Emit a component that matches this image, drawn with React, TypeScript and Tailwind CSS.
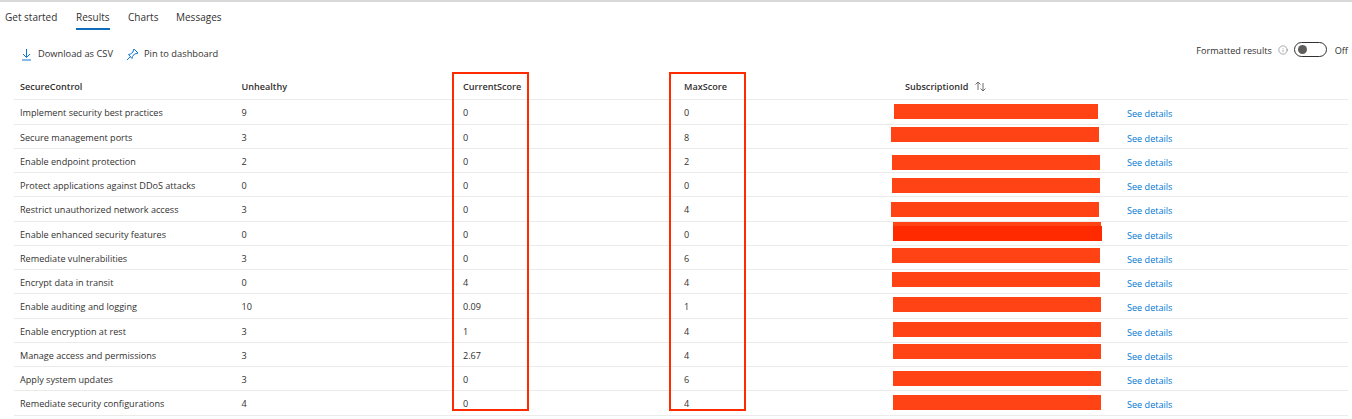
import { Info } from "lucide-react"

const rows = [
  { name: "Implement security best practices", unhealthy: "9", current: "0", max: "0", h: "h-[25px]", bar: [880, 4, 204] },
  { name: "Secure management ports", unhealthy: "3", current: "0", max: "8", h: "h-[24px]", bar: [877, 2, 208] },
  { name: "Enable endpoint protection", unhealthy: "2", current: "0", max: "2", h: "h-[24px]", bar: [878, 6, 208] },
  { name: "Protect applications against DDoS attacks", unhealthy: "0", current: "0", max: "0", h: "h-[24px]", bar: [878, 5, 208] },
  { name: "Restrict unauthorized network access", unhealthy: "3", current: "0", max: "4", h: "h-[25px]", bar: [877, 5, 208] },
  { name: "Enable enhanced security features", unhealthy: "0", current: "0", max: "0", h: "h-[24px]", bar: [879, 0, 208] },
  { name: "Remediate vulnerabilities", unhealthy: "3", current: "0", max: "6", h: "h-[24px]", bar: [878, 2, 208] },
  { name: "Encrypt data in transit", unhealthy: "0", current: "4", max: "4", h: "h-[24px]", bar: [878, 2, 208] },
  { name: "Enable auditing and logging", unhealthy: "10", current: "0.09", max: "1", h: "h-[25px]", bar: [879, 3, 208] },
  { name: "Enable encryption at rest", unhealthy: "3", current: "1", max: "4", h: "h-[24px]", bar: [879, 3, 208] },
  { name: "Manage access and permissions", unhealthy: "3", current: "2.67", max: "4", h: "h-[24px]", bar: [879, 1, 208] },
  { name: "Apply system updates", unhealthy: "3", current: "0", max: "6", h: "h-[24px]", bar: [879, 4, 208] },
  { name: "Remediate security configurations", unhealthy: "4", current: "0", max: "4", h: "h-[25px]", bar: [879, 4, 208] },
]

const gridCols = "grid grid-cols-[221.5px_221.5px_221px_221px_222px_1fr] pl-[6px]"

export default function App() {
  return (
    <div className="h-[419px] w-[1352px] overflow-hidden bg-white font-['Open_Sans',sans-serif] text-[9.1px] text-[#323130] relative">
      <div className="h-[2px] bg-[#d9d9d9]" />

      {/* Tabs */}
      <div className="flex h-[28px] pl-[5px] text-[10px]">
        <div className="w-[71px] pt-[8px]">Get started</div>
        <div className="w-[52px] pt-[8px]">
          <div className="w-[34px] h-[20px] border-b-2 border-[#0f6cbd] font-medium">Results</div>
        </div>
        <div className="w-[48px] pt-[8px]">Charts</div>
        <div className="pt-[8px]">Messages</div>
      </div>

      {/* Toolbar */}
      <div className="flex items-center justify-between h-[27px] mt-[6px] pl-[21px] pr-[4px]">
        <div className="flex items-center mt-[9px] text-[9.3px]">
          <svg className="w-[11px] h-[13px] text-[#0f78d4]" viewBox="0 0 11 13" fill="none" stroke="currentColor">
            <path d="M5.500 1v8M2 6l3.500 3.500L9 6M1 12h9" />
          </svg>
          <span className="ml-[6px]">Download as CSV</span>
          <svg className="ml-[13px] w-[13px] h-[13px] text-[#0f78d4]" viewBox="0 0 13 13" fill="none" stroke="currentColor">
            <path d="M8 1l4 4-1 .5-2.500 .5-2 2.500-.5 2L2.500 6.500l2-.5L7 4l.5-2.500zM4.500 8.500L1 12" />
          </svg>
          <span className="ml-[5px]">Pin to dashboard</span>
        </div>
        <div className="flex items-center">
          <span className="mt-[2px]">Formatted results</span>
          <Info className="ml-[6px] mt-[1px] w-[10px] h-[10px] text-[#605e5c]" strokeWidth={1.25} />
          <div className="ml-[6px] w-[33px] h-[15px] rounded-full border border-[#323130] flex items-center pl-[3px]">
            <div className="w-[9px] h-[9px] rounded-full bg-[#605e5c]" />
          </div>
          <span className="ml-[8px] mt-[2px]">Off</span>
        </div>
      </div>

      {/* Table */}
      <div className="mt-[10px] ml-[14px] mr-[4px]">
        <div className={`${gridCols} h-[27px] pt-[2px] items-center border-b border-[#edebe9] font-semibold`}>
          <div>SecureControl</div>
          <div>Unhealthy</div>
          <div>CurrentScore</div>
          <div>MaxScore</div>
          <div className="flex items-center">
            SubscriptionId
            <svg className="ml-[6px] w-[13px] h-[11px] text-[#605e5c]" viewBox="0 0 13 11" fill="none" stroke="currentColor" strokeWidth="0.9">
              <path d="M4 9V1M1.500 3.500L4 1l2.500 2.500M9 2v8M6.500 7.500L9 10l2.500-2.500" />
            </svg>
          </div>
          <div />
        </div>
        {rows.map((row, i) => (
          <div key={row.name} className={`${gridCols} ${row.h} pt-[2px] items-center border-b border-[#edebe9] relative`}>
            <div>{row.name}</div>
            <div>{row.unhealthy}</div>
            <div>{row.current}</div>
            <div>{row.max}</div>
            <div />
            <div className="text-[#0078d4] pt-[2px]">See details</div>
            {/* redacted ids */}
            <div
              className="absolute bg-[#ff4314] h-[15px]"
              style={{ left: row.bar[0], top: row.bar[1], width: row.bar[2] }}
            />
            {i === 5 && <div className="absolute left-[879px] top-[4px] w-[209px] h-[15px] bg-[#ff2a00]" />}
          </div>
        ))}
      </div>

      {/* highlight boxes */}
      <div className="absolute left-[452px] top-[72px] w-[77px] h-[339px] border-2 border-[#ff2a00]" />
      <div className="absolute left-[669px] top-[72px] w-[77px] h-[339px] border-2 border-[#ff2a00]" />
    </div>
  )
}
